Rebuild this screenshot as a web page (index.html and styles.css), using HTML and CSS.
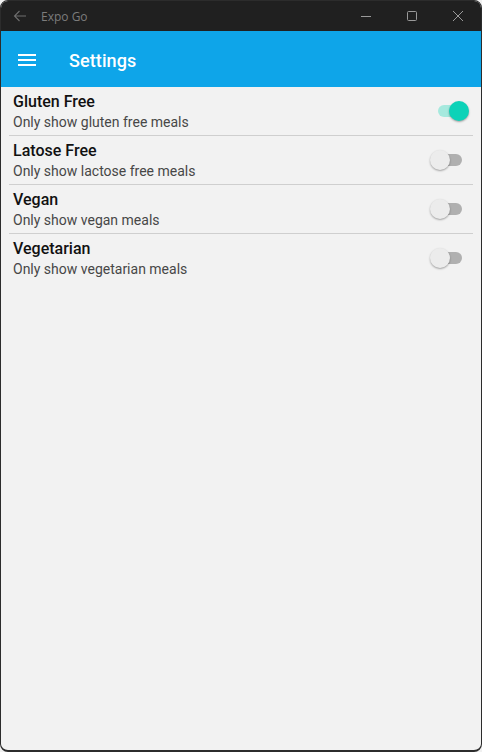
FILE: index.html
```html
<!DOCTYPE html>
<html lang="en">
<head>
<meta charset="utf-8">
<title>Expo Go</title>
<link rel="stylesheet" href="styles.css">
</head>
<body>
<div class="window">
  <div class="titlebar">
    <svg class="tb-back" width="16" height="16" viewBox="0 0 16 16"><path d="M14 8H2.5M7.5 3L2.5 8l5 5" fill="none" stroke="#6e6e6e" stroke-width="1.1"/></svg>
    <span class="tb-title">Expo Go</span>
    <div class="tb-controls">
      <span class="tb-btn"><svg width="12" height="12" viewBox="0 0 12 12"><path d="M1 6.5h10" stroke="#9a9a9a" stroke-width="1"/></svg></span>
      <span class="tb-btn"><svg width="12" height="12" viewBox="0 0 12 12"><rect x="1.5" y="1.5" width="9" height="9" rx="1" fill="none" stroke="#9a9a9a" stroke-width="1"/></svg></span>
      <span class="tb-btn"><svg width="12" height="12" viewBox="0 0 12 12"><path d="M1 1l10 10M11 1L1 11" stroke="#9a9a9a" stroke-width="1"/></svg></span>
    </div>
  </div>
  <header class="appbar">
    <svg class="menu-icon" width="24" height="24" viewBox="0 0 24 24"><path d="M3 18h18v-2H3v2zm0-5h18v-2H3v2zm0-7v2h18V6H3z" fill="#fff"/></svg>
    <h1 class="appbar-title">Settings</h1>
  </header>
  <main class="list">
    <div class="row">
      <div class="row-text">
        <div class="row-title">Gluten Free</div>
        <div class="row-sub">Only show gluten free meals</div>
      </div>
      <span class="switch on"><span class="track"></span><span class="thumb"></span></span>
    </div>
    <div class="row">
      <div class="row-text">
        <div class="row-title">Latose Free</div>
        <div class="row-sub">Only show lactose free meals</div>
      </div>
      <span class="switch"><span class="track"></span><span class="thumb"></span></span>
    </div>
    <div class="row">
      <div class="row-text">
        <div class="row-title">Vegan</div>
        <div class="row-sub">Only show vegan meals</div>
      </div>
      <span class="switch"><span class="track"></span><span class="thumb"></span></span>
    </div>
    <div class="row last">
      <div class="row-text">
        <div class="row-title">Vegetarian</div>
        <div class="row-sub">Only show vegetarian meals</div>
      </div>
      <span class="switch"><span class="track"></span><span class="thumb"></span></span>
    </div>
  </main>
</div>
</body>
</html>
```
FILE: styles.css
```css
html, body {
  margin: 0;
  padding: 0;
  background: #f0f0f0;
}
body {
  font-family: Roboto, "Noto Sans", sans-serif;
}
.window {
  width: 482px;
  height: 752px;
  box-sizing: border-box;
  border: 1px solid #2c2c2c;
  border-bottom-width: 2px;
  border-radius: 8px;
  overflow: hidden;
  background: #f2f2f2;
  display: flex;
  flex-direction: column;
}
.titlebar {
  height: 30px;
  background: #202020;
  display: flex;
  align-items: center;
  flex-shrink: 0;
}
.tb-back {
  margin-left: 11px;
  display: block;
}
.tb-title {
  margin-left: 13px;
  font-family: "Open Sans", "Noto Sans", sans-serif;
  font-size: 12px;
  color: #7c7c7c;
}
.tb-controls {
  margin-left: auto;
  display: flex;
  height: 100%;
}
.tb-btn {
  width: 46px;
  display: flex;
  align-items: center;
  justify-content: center;
}
.tb-btn svg { display: block; }
.appbar {
  height: 56px;
  box-sizing: border-box;
  padding-top: 2px;
  background: #0ea5e9;
  display: flex;
  align-items: center;
  flex-shrink: 0;
}
.menu-icon {
  margin-left: 14px;
  display: block;
}
.appbar-title {
  margin: 0 0 0 30px;
  font-size: 18px;
  font-weight: 500;
  color: #fff;
  letter-spacing: 0.1px;
}
.list {
  display: flex;
  flex-direction: column;
  padding: 0 8px;
}
.row {
  height: 48px;
  display: flex;
  align-items: center;
  border-bottom: 1px solid #cfcfcf;
  padding: 0 4px;
}
.row.last { border-bottom: none; }
.row-text {
  flex: 1;
  align-self: flex-start;
  padding-top: 5px;
  display: flex;
  flex-direction: column;
}
.row-title {
  font-size: 16px;
  font-weight: 500;
  color: #111;
  line-height: 20px;
}
.row-sub {
  font-size: 14px;
  color: #474747;
  line-height: 21px;
}
.switch {
  position: relative;
  width: 40px;
  height: 20px;
  margin-right: -1px;
}
.track {
  position: absolute;
  left: 10px;
  top: 4px;
  width: 22px;
  height: 12px;
  border-radius: 6px;
  background: #b0b0b0;
}
.thumb {
  position: absolute;
  top: 0;
  left: 0;
  width: 20px;
  height: 20px;
  border-radius: 50%;
  background: #ececec;
  box-shadow: 0 1px 2px rgba(0,0,0,0.35);
}
.switch.on .track { background: #a6e9de; left: 8px; }
.switch.on .thumb { left: 19px; background: #0dd2b8; }
```
